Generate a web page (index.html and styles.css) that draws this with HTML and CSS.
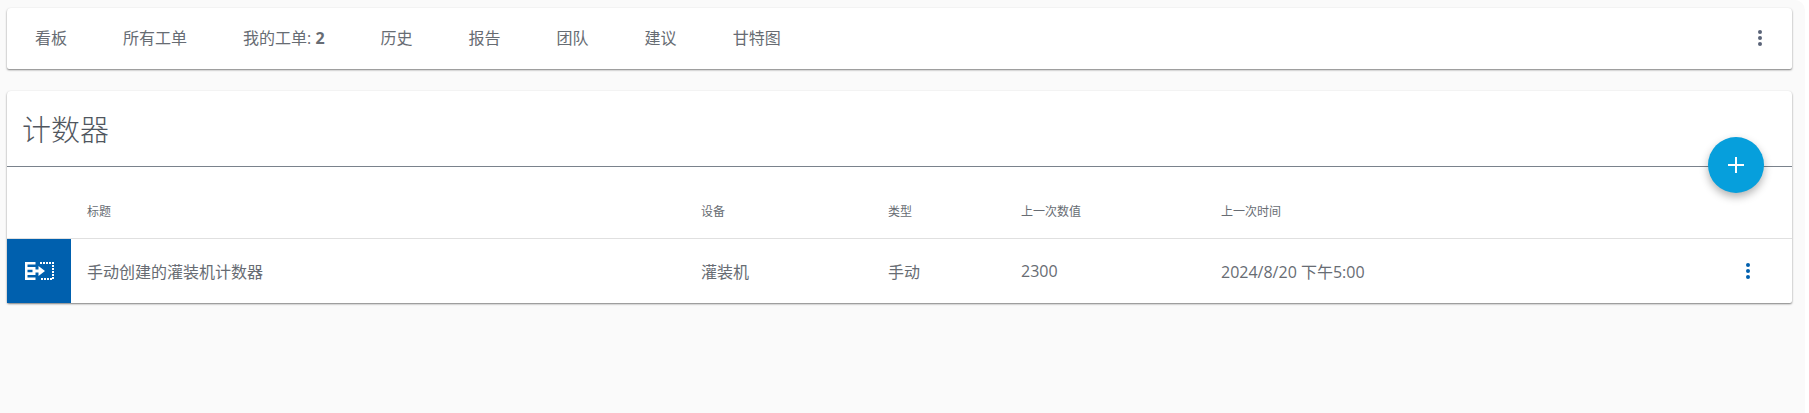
FILE: index.html
```html
<!DOCTYPE html>
<html lang="zh">
<head>
<meta charset="utf-8">
<title>计数器</title>
<link rel="stylesheet" href="styles.css">
</head>
<body>
<main class="page">
  <nav class="card tabs">
    <a class="tab">看板</a>
    <a class="tab">所有工单</a>
    <a class="tab">我的工单: <b>2</b></a>
    <a class="tab">历史</a>
    <a class="tab">报告</a>
    <a class="tab">团队</a>
    <a class="tab">建议</a>
    <a class="tab">甘特图</a>
    <span class="more more-nav">
      <svg viewBox="0 0 4 16" width="4" height="16"><circle cx="2" cy="2" r="2"/><circle cx="2" cy="8" r="2"/><circle cx="2" cy="14" r="2"/></svg>
    </span>
  </nav>
  <section class="card panel">
    <h1 class="title">计数器</h1>
    <button class="fab" type="button" aria-label="添加">
      <svg viewBox="0 0 16 16" width="16" height="16"><path d="M7 0h2v7h7v2H9v7H7V9H0V7h7z"/></svg>
    </button>
    <div class="row head">
      <span class="cell c-icon"></span>
      <span class="cell c-title">标题</span>
      <span class="cell c-device">设备</span>
      <span class="cell c-type">类型</span>
      <span class="cell c-value">上一次数值</span>
      <span class="cell c-time">上一次时间</span>
    </div>
    <div class="row item">
      <span class="c-icon badge">
        <svg viewBox="0 0 29 18" width="29" height="18">
          <path class="solid" d="M0 0h10.500v18H0zM2.500 2.500V5h8V2.500zM2.500 7.800v2.400h5V7.800zM2.500 13v2.500h8V13z"/>
          <path class="solid" d="M8 7.500h5.500V4l6.500 5-6.500 5v-3.500H8z"/>
          <path class="dash" d="M15 1h13v16H15"/>
        </svg>
      </span>
      <span class="cell c-title">手动创建的灌装机计数器</span>
      <span class="cell c-device">灌装机</span>
      <span class="cell c-type">手动</span>
      <span class="cell c-value">2300</span>
      <span class="cell c-time">2024/8/20 下午5:00</span>
      <span class="more more-row">
        <svg viewBox="0 0 4 16" width="4" height="16"><circle cx="2" cy="2" r="2"/><circle cx="2" cy="8" r="2"/><circle cx="2" cy="14" r="2"/></svg>
      </span>
    </div>
  </section>
</main>
</body>
</html>
```
FILE: styles.css
```css
* { box-sizing: border-box; }
html, body { margin: 0; height: 100%; }
body {
  background: #fff;
  color: #676c73;
  font-family: "Open Sans", "Noto Sans CJK SC", sans-serif;
  font-size: 14px;
  overflow: hidden;
}
.page {
  display: flex;
  flex-direction: column;
  gap: 22px;
  width: 1805px;
  height: 100%;
  padding: 8px 13px 0 7px;
  background: #fafafa;
  border-top-right-radius: 10px;
}
.card {
  background: #fff;
  border-radius: 4px 4px 2px 2px;
  box-shadow: 0 1px 2px rgba(0, 0, 0, .5);
}
.tabs {
  display: flex;
  align-items: center;
  height: 61px;
  padding: 0 0 3px 28px;
  gap: 56px;
  font-size: 16px;
}
.tab b { font-weight: 700; }
.more { display: flex; }
.more-nav { margin: 2px 30px 0 auto; fill: #5a6478; }
.panel { position: relative; }
.title {
  margin: 0;
  height: 76px;
  padding: 0 0 0 15px;
  border-bottom: 1px solid #7a828c;
  font-size: 29px;
  font-weight: 300;
  line-height: 78px;
  color: #50565e;
}
.fab {
  position: absolute;
  top: 46px;
  right: 28px;
  width: 56px;
  height: 56px;
  padding: 0;
  border: 0;
  border-radius: 50%;
  background: #069fdc;
  fill: #fff;
  box-shadow: 0 4px 8px rgba(0, 0, 0, .3);
  display: flex;
  align-items: center;
  justify-content: center;
}
.row { display: flex; align-items: center; }
.head {
  height: 72px;
  padding-top: 16px;
  border-bottom: 1px solid #e0e0e0;
  font-size: 12px;
}
.item { height: 64px; font-size: 16px; position: relative; }
.cell { padding-left: 16px; }
.c-icon { width: 64px; flex: none; }
.c-title { width: 614px; flex: none; }
.c-device { width: 187px; flex: none; }
.c-type { width: 133px; flex: none; }
.c-value { width: 200px; flex: none; }
.badge {
  align-self: stretch;
  background: #0060ae;
  display: flex;
  align-items: center;
  justify-content: center;
}
.solid { fill: #fff; fill-rule: evenodd; }
.dash { fill: none; stroke: #fff; stroke-width: 2; stroke-dasharray: 2 1; }
.more-row { margin-left: auto; margin-right: 42px; fill: #0060ae; }
```
